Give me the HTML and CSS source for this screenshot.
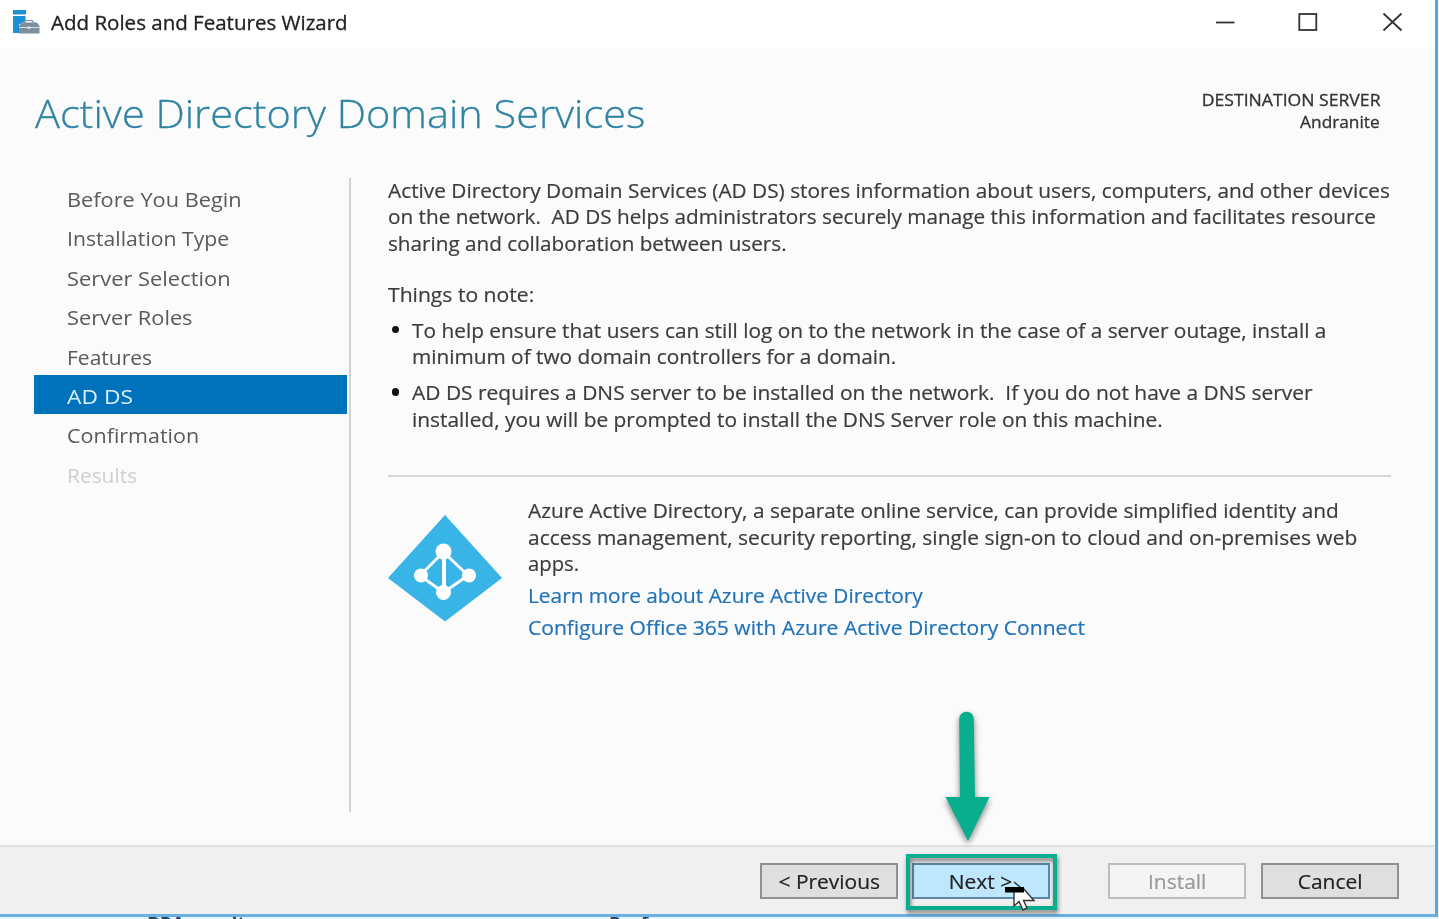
FILE: index.html
```html
<!DOCTYPE html>
<html lang="en">
<head>
<meta charset="utf-8">
<title>Add Roles and Features Wizard</title>
<link rel="stylesheet" href="styles.css">
</head>
<body>
<div class="screen">
  <div class="window">
    <header class="titlebar">
      <svg class="app-icon" width="28" height="26" viewBox="0 0 28 26">
        <path fill="#1f8fd6" d="M0 1h13v4.500H0zM0 7h12.500v5L6 15.500V24H0z"/>
        <path fill="#7b909c" d="M6 17l3-3.500h1.500l2-2.500h7l2 2.500H24l2.500 3.500v7.500H6z"/>
        <path fill="#fff" d="M12 13.500l1.200-1.500h5.600l1.200 1.500z"/>
        <path stroke="#d5dee3" stroke-width="1" fill="none" d="M6.500 18.500h19.500"/>
        <path fill="#d5dee3" d="M14.500 17.500h3v2.500h-3z"/>
      </svg>
      <span class="title"><span class="t">Add Roles and Features Wizard</span></span>
      <svg class="controls" width="192" height="24" viewBox="0 0 192 24" fill="none" stroke="#333">
        <path stroke-width="1.800" d="M2 12.500h18.500"/>
        <rect stroke-width="1.800" x="85.300" y="4" width="17" height="16"/>
        <path stroke-width="1.800" d="M169.500 3.500l18 17M187.500 3.500l-18 17"/>
      </svg>
    </header>
    <section class="heading">
      <h1><span class="t">Active Directory Domain Services</span></h1>
      <div class="destination">
        <div><span class="t dest-label">DESTINATION SERVER</span></div>
        <div><span class="t dest-name">Andranite</span></div>
      </div>
    </section>
    <main class="body">
      <nav class="steps">
        <a><span class="t n1">Before You Begin</span></a>
        <a><span class="t n2">Installation Type</span></a>
        <a><span class="t n3">Server Selection</span></a>
        <a><span class="t n4">Server Roles</span></a>
        <a><span class="t n5">Features</span></a>
        <a class="active"><span class="t n6">AD DS</span></a>
        <a><span class="t n7">Confirmation</span></a>
        <a class="disabled"><span class="t n8">Results</span></a>
      </nav>
      <article class="content">
        <p class="intro">
          <span class="t l1">Active Directory Domain Services (AD DS) stores information about users, computers, and other devices</span>
          <span class="t l2">on the network.&nbsp; AD DS helps administrators securely manage this information and facilitates resource</span>
          <span class="t l3">sharing and collaboration between users.</span>
        </p>
        <p class="note"><span class="t l4">Things to note:</span></p>
        <ul>
          <li><span class="t l5">To help ensure that users can still log on to the network in the case of a server outage, install a</span>
              <span class="t l6">minimum of two domain controllers for a domain.</span></li>
          <li><span class="t l7">AD DS requires a DNS server to be installed on the network.&nbsp; If you do not have a DNS server</span>
              <span class="t l8">installed, you will be prompted to install the DNS Server role on this machine.</span></li>
        </ul>
        <div class="azure">
          <svg class="azure-icon" width="114" height="107" viewBox="0 0 114 107">
            <path fill="#38b4e6" d="M57 0l57 63-57 43.500L0 63z"/>
            <g stroke="#fff" fill="none">
              <path stroke-width="3" d="M55.500 37L32 60.500l23.500 17L80 60.500z"/>
              <path stroke-width="4" d="M56 37v41"/>
            </g>
            <g fill="#fff"><circle cx="55.500" cy="36.500" r="8"/><circle cx="33" cy="60.500" r="7"/><circle cx="81" cy="60.500" r="7"/><circle cx="55.500" cy="77.500" r="7.500"/></g>
          </svg>
          <div class="azure-text">
            <p><span class="t l9">Azure Active Directory, a separate online service, can provide simplified identity and</span>
            <span class="t l10">access management, security reporting, single sign-on to cloud and on-premises web</span>
            <span class="t l11">apps.</span></p>
            <a><span class="t l12">Learn more about Azure Active Directory</span></a>
            <a><span class="t l13">Configure Office 365 with Azure Active Directory Connect</span></a>
          </div>
        </div>
      </article>
    </main>
    <footer class="footer">
      <button class="btn prev"><span class="t">&lt; Previous</span></button>
      <button class="btn next"><span class="t">Next &gt;</span></button>
      <button class="btn install" disabled><span class="t">Install</span></button>
      <button class="btn cancel"><span class="t">Cancel</span></button>
    </footer>
  </div>
  <div class="behind"><span class="b1">BPA results</span><span class="b2">Performance</span></div>
  <svg class="arrow" width="64" height="150" viewBox="0 0 64 150">
    <path fill="#08ae8d" d="M19.200 14a7.300 7.300 0 0 1 14.600 0l1.200 78h14.500L28 136 5.500 92H20z"/>
  </svg>
  <div class="highlight"></div>
  <svg class="cursor" width="34" height="34" viewBox="0 0 34 34">
    <path fill="none" stroke="#333" stroke-width="1.500" d="M9 2l11 9"/>
    <path fill="#fff" stroke="#333" stroke-width="1.400" d="M9 9v17l5-4.500 4 8.500 4-2-3.500-7.500H29L18 8z"/>
    <path fill="#000" d="M0 7h19v5.500H0z"/>
  </svg>
</div>
</body>
</html>
```
FILE: styles.css
```css
* { box-sizing: border-box; }
body { margin: 0; font-family: "Open Sans", "Noto Sans", sans-serif; color: #3c3c3c; }
h1, p, ul { margin: 0; padding: 0; font-weight: 400; }
.screen { position: relative; width: 1439px; height: 919px; overflow: hidden; background: #e9f5fd; }
.window { width: 1438px; height: 917px; border-right: 3px solid #5ba7dc; border-bottom: 3px solid #6bb0e2; background: #fbfbfb; display: flex; flex-direction: column; }
.t { white-space: nowrap; display: inline-block; transform-origin: left center; }
.titlebar { height: 48px; background: #fff; display: flex; align-items: flex-start; padding: 9px 0 0 13px; }
.title { font-size: 20px; line-height: 28px; margin-left: 9.500px; color: #222; flex: 1; -webkit-text-stroke: 0.300px; }
.title .t { transform: scaleX(1.026); }
.controls { margin: 1px 29px 0 0; }
.heading { height: 130px; display: flex; justify-content: space-between; padding: 38px 55px 0 35px; }
h1 { font-size: 39px; font-weight: 300; line-height: 54px; color: #2f84a3; -webkit-text-stroke: 0.300px; }
h1 .t { transform: scaleX(1.063); }
.destination { text-align: right; font-size: 16px; line-height: 21.500px; padding-top: 4px; color: #333; -webkit-text-stroke: 0.300px; }
.destination .t { transform-origin: right center; }
.dest-label { transform: scaleX(1.1); }
.dest-name { transform: scaleX(1.08); }
.body { height: 667px; display: flex; padding-left: 34px; }
.steps { width: 317px; height: 634px; border-right: 2px solid #d2d2d2; padding-right: 2px; }
.steps a { display: block; height: 39.400px; line-height: 44.400px; padding-left: 33px; font-size: 20px; color: #5a5a5a; }
.steps .active { background: #0072bc; color: #d9effc; }
.steps .disabled { color: #cfcfcf; }
.n1 { transform: scaleX(1.088); }
.n2 { transform: scaleX(1.06); }
.n3 { transform: scaleX(1.094); }
.n4 { transform: scaleX(1.09); }
.n5 { transform: scaleX(1.05); }
.n6 { transform: scaleX(1.14); }
.n7 { transform: scaleX(1.075); }
.n8 { transform: scaleX(1.045); }
.content { width: 1003px; margin-left: 37px; font-size: 19.500px; line-height: 26.400px; -webkit-text-stroke: 0.200px; }
.content p .t, .content li .t { display: block; width: max-content; }
.l1 { transform: scaleX(1.0675); }
.l2 { transform: scaleX(1.0635); }
.l3 { transform: scaleX(1.061); }
.l4 { transform: scaleX(1.083); }
.l5 { transform: scaleX(1.068); }
.l6 { transform: scaleX(1.066); }
.l7 { transform: scaleX(1.0745); }
.l8 { transform: scaleX(1.071); }
.l9 { transform: scaleX(1.068); }
.l10 { transform: scaleX(1.0755); }
.l11 { transform: scaleX(1.04); }
.l12 { transform: scaleX(1.068); }
.l13 { transform: scaleX(1.08); }
.note { margin-top: 24.500px; }
ul { list-style: none; margin-top: 9.500px; }
li { position: relative; padding-left: 24px; margin-bottom: 10px; }
li::before { content: ""; position: absolute; left: 3.500px; top: 8px; width: 7.500px; height: 7.500px; border-radius: 50%; background: #111; }
.azure { margin-top: 42px; border-top: 2px solid #d6d6d6; display: flex; padding-top: 21px; }
.azure-icon { margin-top: 17px; }
.azure-text { margin-left: 26px; }
.azure-text a { display: block; color: #2173b8; margin-top: 5.500px; }
.footer { flex: 1; background: #f0f0f0; border-top: 2px solid #e1e1e1; display: flex; padding: 16px 0 0 760px; }
.btn { width: 138px; height: 36px; padding: 2px 0 0; font: 19.500px/30px "Open Sans", sans-serif; color: #222; background: #dfdfdf; border: 2px solid #919191; -webkit-text-stroke: 0.200px; }
.btn .t { transform: scaleX(1.075); transform-origin: center; }
.next { margin-left: 14px; background: #bee6fd; border-color: #5d87a8; }
.install { margin-left: 58px; background: #f4f4f4; border-color: #bdbdbd; color: #999; }
.cancel { margin-left: 15px; }
.behind { position: relative; height: 2px; overflow: hidden; font-size: 19px; font-weight: 700; line-height: 20px; color: #24465e; }
.b1 { position: absolute; left: 147px; top: -3px; }
.b2 { position: absolute; left: 609px; top: -3px; }
.arrow { position: absolute; left: 940px; top: 705px; filter: drop-shadow(0 3px 3px rgba(0,0,0,.5)); }
.highlight { position: absolute; left: 906px; top: 854px; width: 151px; height: 56px; border: 4px solid #08ae8d; filter: drop-shadow(1px 3px 2px rgba(0,0,0,.5)); }
.cursor { position: absolute; left: 1005px; top: 880px; }
```
